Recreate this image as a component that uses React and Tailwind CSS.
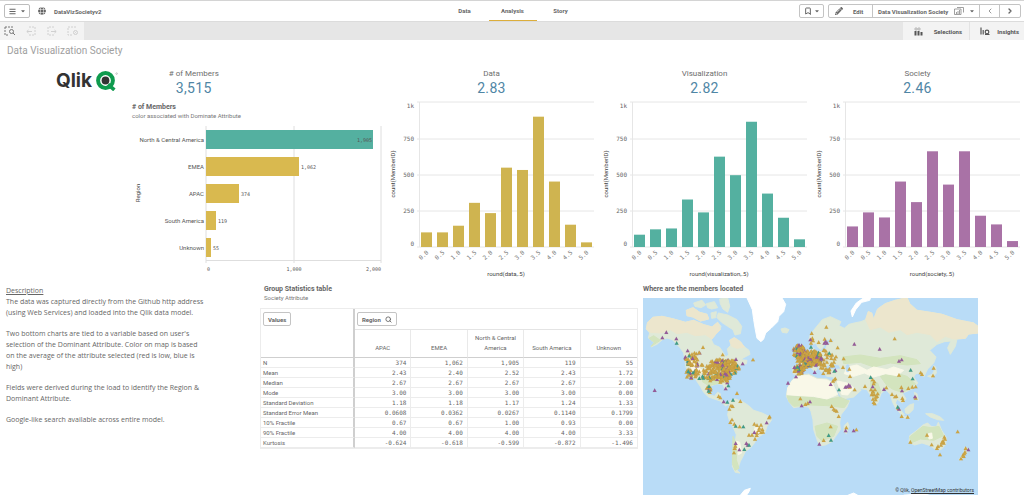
import React, { useState } from "react";
import clsx from "clsx";
import { FaBars, FaCaretDown, FaGlobe, FaPencilAlt } from "react-icons/fa";
import { LuBookmark, LuChevronLeft, LuChevronRight, LuSearch } from "react-icons/lu";

const GOLD = "#cfb450";
const TEAL = "#54b0a0";
const PURPLE = "#a972a6";

const tabs = ["Data", "Analysis", "Story"];

const regions = [
  { name: "North & Central America", value: 1905, label: "1,905", color: TEAL },
  { name: "EMEA", value: 1062, label: "1,062", color: "#d9b94f" },
  { name: "APAC", value: 374, label: "374", color: "#d9b94f" },
  { name: "South America", value: 119, label: "119", color: "#d9b94f" },
  { name: "Unknown", value: 55, label: "55", color: "#d9b94f" },
];

const histograms = [
  {
    title: "Data",
    kpi: "2.83",
    axis: "round(data,.5)",
    color: GOLD,
    values: [101, 101, 147, 305, 234, 548, 532, 900, 452, 154, 32],
  },
  {
    title: "Visualization",
    kpi: "2.82",
    axis: "round(visualization,.5)",
    color: TEAL,
    values: [85, 122, 128, 328, 239, 624, 496, 865, 369, 202, 53],
  },
  {
    title: "Society",
    kpi: "2.46",
    axis: "round(society,.5)",
    color: PURPLE,
    values: [142, 239, 204, 452, 310, 661, 431, 661, 216, 156, 41],
  },
];

const columns = ["APAC", "EMEA", "North & Central America", "South America", "Unknown"];

const rows = [
  ["N", "374", "1,062", "1,905", "119", "55"],
  ["Mean", "2.43", "2.40", "2.52", "2.43", "1.72"],
  ["Median", "2.67", "2.67", "2.67", "2.67", "2.00"],
  ["Mode", "3.00", "3.00", "3.00", "3.00", "0.00"],
  ["Standard Deviation", "1.18", "1.18", "1.17", "1.24", "1.33"],
  ["Standard Error Mean", "0.0608", "0.0362", "0.0267", "0.1140", "0.1799"],
  ["10% Fractile", "0.67", "0.67", "1.00", "0.93", "0.00"],
  ["90% Fractile", "4.00", "4.00", "4.00", "4.00", "3.33"],
  ["Kurtosis", "-0.624", "-0.618", "-0.599", "-0.872", "-1.496"],
];

function QlikMark() {
  return (
    <svg viewBox="0 0 22 20" className="h-5 w-[22px]" aria-hidden="true">
      <circle cx="9.5" cy="9.5" r="7.4" fill="none" stroke="#0f9b4e" strokeWidth="4" />
      <path d="M12 13.5l6.4 5.4" stroke="#0f9b4e" strokeWidth="3.6" />
      <circle cx="9.5" cy="9.5" r="3.9" fill="#333" />
      <circle cx="20.6" cy="2.6" r="0.8" fill="none" stroke="#999" strokeWidth="0.5" />
    </svg>
  );
}

function SelectionTool({ type }) {
  return (
    <svg viewBox="0 0 12 10" className="h-[10px] w-3" fill="none" stroke="currentColor" strokeWidth="1">
      {type === "search" && (
        <>
          <path d="M1 1h8M1 1v8h4" strokeDasharray="2 1" />
          <circle cx="7.5" cy="5.5" r="2" />
          <path d="M9 7l2 2" />
        </>
      )}
      {type === "back" && (
        <>
          <path d="M4 1h6v8H4" strokeDasharray="2 1" />
          <path d="M7 5.5H2M3.5 4L1.8 5.5l1.7 1.5" />
        </>
      )}
      {type === "forward" && (
        <>
          <path d="M8 1H2v8h6" strokeDasharray="2 1" />
          <path d="M5 5.5h5M8.5 4l1.7 1.5L8.5 7" />
        </>
      )}
      {type === "clear" && (
        <>
          <path d="M9 1H1v8h4" strokeDasharray="2 1" />
          <circle cx="8.5" cy="6.5" r="2" />
          <path d="M7.5 5.5l2 2M9.5 5.5l-2 2" strokeWidth="0.6" />
        </>
      )}
    </svg>
  );
}

function Header() {
  const [active, setActive] = useState("Analysis");

  return (
    <header className="flex h-[21px] items-stretch border-t border-[#d4d4d4] bg-white text-[6px] font-bold text-[#666]">
      <div className="flex flex-1 items-center gap-2 pl-1">
        <button
          type="button"
          aria-label="Navigation menu"
          className="flex h-[14px] w-[26px] items-center justify-center gap-1 rounded-xs border border-[#bdbdbd]"
        >
          <FaBars className="size-[7px]" />
          <FaCaretDown className="size-[6px]" />
        </button>
        <FaGlobe className="size-2" />
        <span>DataVizSocietyv2</span>
      </div>

      <nav className="flex">
        {tabs.map((tab) => (
          <button
            key={tab}
            type="button"
            onClick={() => setActive(tab)}
            className={clsx(
              "w-12 border-b",
              tab === active ? "border-[#dcae3c]" : "border-transparent"
            )}
          >
            {tab}
          </button>
        ))}
      </nav>

      <div className="flex flex-1 items-center justify-end gap-1 pr-[3px]">
        <button
          type="button"
          aria-label="Bookmarks"
          className="flex h-[14px] w-[25px] items-center justify-center gap-[2px] rounded-xs border border-[#c4c4c4]"
        >
          <LuBookmark className="size-2" strokeWidth={3} />
          <FaCaretDown className="size-[6px]" />
        </button>
        <div className="flex h-[14px] divide-x divide-[#c4c4c4] rounded-xs border border-[#c4c4c4]">
          <button type="button" className="flex w-11 items-center gap-[10px] pl-[6px]">
            <FaPencilAlt className="size-2" />
            Edit
          </button>
          <button
            type="button"
            className="flex w-[107px] items-center justify-between pr-1 pl-[5px] whitespace-nowrap"
          >
            Data Visualization Society
            <svg viewBox="0 0 10 8" className="h-2 w-[10px]" fill="none" stroke="#888">
              <path d="M3 0.5h6.5v5M0.5 2h6.5v5.5h-6.5zM2.5 7V5M4 7V4M5.5 7V3" strokeWidth="0.8" />
            </svg>
            <FaCaretDown className="size-[6px]" />
          </button>
          <button type="button" aria-label="Previous sheet" className="flex w-5 items-center justify-center">
            <LuChevronLeft className="size-2" strokeWidth={2} />
          </button>
          <button type="button" aria-label="Next sheet" className="flex w-5 items-center justify-center">
            <LuChevronRight className="size-2" strokeWidth={4} />
          </button>
        </div>
      </div>
    </header>
  );
}

function SelectionBar() {
  return (
    <div className="flex h-[19px] justify-between border-t border-[#dcdcdc] bg-[#e6e6e6] text-[6px] font-bold text-[#555]">
      <div className="flex w-[84px] items-center gap-[9px] bg-[#f3f3f3] pl-1">
        <button type="button" aria-label="Selection search" className="text-[#777]">
          <SelectionTool type="search" />
        </button>
        <button type="button" aria-label="Step back" className="text-[#d0d0d0]">
          <SelectionTool type="back" />
        </button>
        <button type="button" aria-label="Step forward" className="text-[#d0d0d0]">
          <SelectionTool type="forward" />
        </button>
        <button type="button" aria-label="Clear selections" className="text-[#d0d0d0]">
          <SelectionTool type="clear" />
        </button>
      </div>
      <div className="flex divide-x divide-[#e3e3e3] bg-[#f3f3f3]">
        <button type="button" className="flex w-[67px] items-center justify-between pr-[7px] pl-[11px]">
          <svg viewBox="0 0 9 9" className="size-[9px]" fill="#555">
            <path d="M1 1h2v2H1zM4 1h2v2H4z" fill="none" stroke="#999" strokeWidth="0.6" />
            <path d="M0.5 4h2v4.5h-2zM3.5 4h2v4.5h-2zM6.5 5h2v3.5h-2z" />
          </svg>
          Selections
        </button>
        <button type="button" className="flex w-[54px] items-center justify-between pr-[5px] pl-[10px]">
          <svg viewBox="0 0 10 9" className="h-[9px] w-[10px]" fill="none" stroke="#555" strokeWidth="1.2">
            <path d="M1 0.5v7M3.2 3v4.5M5 7.5h4.5" />
            <circle cx="7" cy="5" r="1.8" />
          </svg>
          Insights
        </button>
      </div>
    </div>
  );
}

function Kpi({ title, value }) {
  return (
    <div className="pt-[6px] text-center">
      <div className="text-[8px] leading-[10px] text-[#6e6e6e]">{title}</div>
      <div className="text-[14px] leading-[18px] tracking-wide text-[#4f86a5]">{value}</div>
    </div>
  );
}

function RegionChart() {
  return (
    <svg viewBox="0 0 255 160" className="w-full" role="img" aria-label="Members by region">
      {[76, 164, 251].map((x) => (
        <line key={x} x1={x} x2={x} y1="4" y2="141" stroke="#dedede" />
      ))}
      <line x1="76" x2="251" y1="138.5" y2="138.5" stroke="#dedede" />
      {regions.map((region, i) => {
        const y = 8 + i * 27;
        const width = Math.round((region.value / 2000) * 175);
        const inside = region.value > 1500;
        return (
          <g key={region.name}>
            <rect x="76" y={y} width={width} height="19" fill={region.color} />
            <text x="74" y={y + 12} textAnchor="end" className="fill-[#555] text-[6px]">
              {region.name}
            </text>
            <text
              x={inside ? 75 + width : 78 + width}
              y={y + 12}
              textAnchor={inside ? "end" : "start"}
              className="fill-[#555] font-['DejaVu_Sans_Mono',monospace] text-[5px]"
            >
              {region.label}
            </text>
          </g>
        );
      })}
      <g className="fill-[#555] font-['DejaVu_Sans_Mono',monospace] text-[5px]">
        <text x="77" y="149">0</text>
        <text x="164" y="149" textAnchor="middle">1,000</text>
        <text x="251" y="149" textAnchor="end">2,000</text>
      </g>
      <text transform="translate(10 71) rotate(-90)" textAnchor="middle" className="fill-[#444] text-[6px]">
        Region
      </text>
    </svg>
  );
}

function Histogram({ data }) {
  const base = 150;
  const unit = 36.2 / 250;
  const ticks = [
    { label: "1k", y: 5, text: 11 },
    { label: "750", y: 42, text: 44 },
    { label: "500", y: 78, text: 80 },
    { label: "250", y: 114, text: 116 },
    { label: "0", y: 150, text: 149 },
  ];

  return (
    <svg viewBox="0 0 213 185" className="w-full" role="img" aria-label={data.axis}>
      {ticks.map((tick) => (
        <g key={tick.label}>
          <line x1="32" x2="209" y1={tick.y} y2={tick.y} stroke="#e6e6e6" />
          <text
            x="29"
            y={tick.text}
            textAnchor="end"
            className="fill-[#666] font-['DejaVu_Sans_Mono',monospace] text-[6px]"
          >
            {tick.label}
          </text>
        </g>
      ))}
      <line x1="34.5" x2="34.5" y1="5" y2="150" stroke="#e6e6e6" />
      {data.values.map((value, i) => {
        const x = 36 + i * 16;
        return (
          <g key={i}>
            <rect x={x} y={base - value * unit} width="11" height={value * unit} fill={data.color} />
            <text
              transform={`translate(${x + 8} 156) rotate(-42)`}
              textAnchor="end"
              className="fill-[#777] font-['DejaVu_Sans_Mono',monospace] text-[6px]"
            >
              {(i / 2).toFixed(1)}
            </text>
          </g>
        );
      })}
      <text x="121" y="179" textAnchor="middle" className="fill-[#444] text-[6px]">
        {data.axis}
      </text>
      <text transform="translate(10 77) rotate(-90)" textAnchor="middle" className="fill-[#444] text-[6px]">
        count(MemberID)
      </text>
    </svg>
  );
}

function StatsTable() {
  return (
    <table className="w-full table-fixed border-separate border-spacing-0 border border-[#ececec] text-[6px] text-[#666]">
      <colgroup>
        <col className="w-1/4" />
        {columns.map((column) => (
          <col key={column} />
        ))}
      </colgroup>
      <thead>
        <tr className="h-[21px]">
          <th rowSpan={2} className="border-r-2 border-b border-[#cfcfcf] px-[2px] pt-[3px] text-left align-top">
            <button type="button" className="h-[14px] rounded-xs border border-[#c4c4c4] px-1 font-bold">
              Values
            </button>
          </th>
          <th colSpan={5} className="border-b border-[#e4e4e4] px-[2px] text-left">
            <button
              type="button"
              className="flex h-[14px] items-center gap-1 rounded-xs border border-[#c4c4c4] px-1 font-bold"
            >
              Region
              <LuSearch className="size-[7px]" strokeWidth={3} />
            </button>
          </th>
        </tr>
        <tr className="h-7">
          {columns.map((column) => (
            <th
              key={column}
              className="border-r border-b border-r-[#e9e9e9] border-b-[#cfcfcf] px-1 pb-1 align-bottom leading-[10px] font-normal last:border-r-0"
            >
              {column}
            </th>
          ))}
        </tr>
      </thead>
      <tbody>
        {rows.map(([name, ...cells]) => (
          <tr key={name} className="h-[10px] leading-[9px]">
            <th
              scope="row"
              className="border-r-2 border-b border-r-[#cfcfcf] border-b-[#ececec] pl-[2px] text-left font-normal whitespace-nowrap"
            >
              {name}
            </th>
            {cells.map((cell, i) => (
              <td
                key={i}
                className="border-r border-b border-[#ececec] pr-1 text-right font-['DejaVu_Sans_Mono',monospace] text-[6px] last:border-r-0"
              >
                {cell}
              </td>
            ))}
          </tr>
        ))}
      </tbody>
    </table>
  );
}

// Coast lines, in map units
const land = [
  // North America
  "22,128 38,113 65,110 100,118 135,128 160,122 190,135 215,142 232,128 242,140 238,152 225,165 213,180 220,195 238,203 248,218 257,232 265,225 261,208 272,196 268,182 282,174 300,186 310,200 326,212 329,224 310,234 302,240 320,242 318,252 300,256 290,268 278,280 268,295 258,308 263,325 256,332 248,315 230,312 212,318 205,330 208,345 222,350 232,338 241,343 238,355 248,366 264,374 256,379 240,364 222,358 205,352 190,338 180,320 163,295 145,280 137,262 133,235 130,220 120,205 108,192 96,180 80,175 66,180 50,194 32,202 42,188 24,175 28,160 18,148",
  // Arctic islands
  "138,92 158,84 178,98 200,104 205,118 180,124 158,112 140,108",
  "160,70 185,62 196,76 182,84 164,80",
  "198,72 222,66 232,84 214,88 202,84",
  "212,100 228,96 226,114 214,116",
  "238,58 262,55 268,80 262,98 248,88 240,72",
  "234,100 262,106 290,120 304,140 300,162 284,166 278,150 262,140 244,128 230,114",
  // South America
  "268,365 285,358 305,365 325,378 340,392 365,400 390,412 393,422 380,440 373,460 350,475 342,490 330,505 315,515 308,530 300,545 295,560 290,572 299,580 285,578 276,560 279,530 284,490 288,465 280,445 268,425 262,405 265,390",
  // Africa
  "470,287 505,283 530,296 560,298 577,307 590,342 602,364 628,362 620,382 602,405 598,430 600,450 586,470 575,486 555,496 540,498 532,485 520,450 518,420 512,395 505,382 485,380 460,384 447,368 438,350 442,325 455,302",
  "612,438 622,428 626,440 618,462 611,456",
  // Europe and Asia
  "458,282 457,262 478,258 470,245 480,238 492,232 505,222 515,216 512,204 521,206 526,218 545,215 556,210 560,196 575,186 588,180 568,178 556,182 552,196 542,210 532,202 528,190 516,194 506,180 510,165 528,142 546,120 570,111 602,126 596,138 612,146 626,134 642,130 662,126 676,120 684,96 694,100 700,120 712,88 735,72 765,62 800,54 808,72 830,92 870,98 905,104 950,120 1000,130 1013,140 1013,160 985,163 975,176 950,178 945,200 930,224 922,205 932,184 912,186 890,194 868,212 887,232 880,250 862,268 850,292 840,280 826,282 820,292 832,310 820,325 800,335 786,340 797,358 786,370 770,358 765,370 777,388 770,392 757,368 750,345 736,328 722,342 712,370 702,376 690,346 680,330 657,326 662,332 640,352 606,358 594,336 578,306 580,292 560,290 548,280 560,270 580,270 602,268 596,256 572,252 556,262 544,278 532,262 515,250 530,268 524,276 505,258 492,258 480,272 470,285",
  "480,224 490,222 492,212 484,196 476,194 473,204 478,212",
  "460,220 470,216 470,206 461,208",
  "422,148 434,145 446,150 440,160 426,158",
  // Oceania and south east Asia
  "806,488 808,468 830,452 848,436 862,430 872,440 888,442 894,428 904,452 918,474 916,494 902,510 886,510 870,498 845,490 822,496",
  "856,402 876,402 900,412 910,422 892,420 870,412",
  "794,388 808,376 820,372 818,390 806,402 796,400",
  "762,374 774,382 792,406 786,408 768,388",
  "784,410 808,412 806,416 786,414",
  "822,338 830,342 834,362 826,356",
  "862,290 876,284 884,268 880,258 886,262 888,280 876,294",
  "974,502 986,510 978,520 962,542 956,540 970,522",
];

const tundra = [
  "22,128 38,113 65,110 100,118 135,128 160,122 190,135 215,142 232,128 240,150 225,165 215,178 195,165 165,168 140,158 110,162 90,150 60,160 30,158 18,148",
  "138,92 158,84 178,98 200,104 205,118 180,124 158,112 140,108",
  "676,120 684,96 694,100 700,120 712,88 735,72 765,62 800,54 808,72 830,92 870,98 905,104 950,120 1000,130 1013,140 1013,160 985,163 975,176 940,178 915,170 890,186 870,165 830,158 800,165 780,150 745,158 720,142 690,150",
  "268,182 282,174 300,186 312,202 290,206 274,200",
];

const meadow = [
  "606,232 660,226 720,236 780,228 830,240 840,252 800,256 750,250 700,262 660,248 610,252",
  "720,290 760,278 800,290 825,312 800,332 786,338 760,330 740,318",
  "440,348 480,350 520,354 560,360 598,352 626,364 612,384 560,378 512,376 460,380 446,366",
  "524,440 560,430 592,440 580,470 545,484 530,470",
  "808,472 848,440 872,444 896,440 910,468 880,482 840,478 812,490",
  "32,200 42,188 26,176 40,168 60,182",
  "190,290 225,282 262,300 240,310 205,318 186,306",
  "278,470 290,500 288,540 296,566 284,572 276,552",
  "690,300 712,310 722,336 706,366 694,344",
];

const bare = [
  "442,325 455,304 470,290 505,287 530,299 560,301 575,309 592,344 560,358 520,350 480,348 440,345",
  "620,262 650,256 680,272 700,262 740,270 760,262 790,272 770,288 735,282 700,292 672,280 640,290 612,282",
  "590,304 620,310 640,324 622,346 604,344",
  "148,240 165,235 172,262 190,275 176,286 156,276",
  "864,462 874,460 876,476 866,478",
  "289,485 298,488 304,520 294,525",
  "345,440 360,444 356,462 340,462",
];

const ice = [
  "320,55 425,55 436,74 430,96 416,110 412,126 392,146 376,160 370,178 362,186 350,176 345,150 340,120 336,90",
  "636,112 632,94 648,70 668,56 692,50 688,62 664,68 646,90",
  "300,647 312,632 330,626 326,636 318,648",
  "620,648 640,640 654,648",
  "790,647 850,641 870,648",
];

// g = data, t = visualization, p = society
const members = {
  g: [
    [188, 203], [247, 225], [338, 240], [290, 341], [300, 365], [235, 350], [240, 354], [277, 380], [267, 388], [272, 378],
    [388, 411], [386, 414], [275, 420], [270, 428], [282, 433], [298, 441], [342, 433], [350, 437], [362, 436], [366, 449], [355, 452],
    [362, 458], [349, 467], [344, 478], [335, 466], [326, 466], [368, 457], [285, 499], [283, 506], [281, 519], [350, 460], [357, 445],
    [480, 357], [502, 371], [495, 374], [574, 380], [580, 388], [589, 394], [595, 410], [584, 392], [571, 441], [550, 482], [618, 444], [648, 450],
    [514, 161], [558, 142], [518, 183], [553, 178], [571, 182], [512, 190], [535, 188], [516, 176], [592, 204], [587, 231], [610, 237], [608, 263], [627, 268],
    [629, 290], [585, 297], [578, 304], [582, 300], [643, 330], [628, 322], [674, 320], [697, 300], [702, 306], [700, 312], [692, 330], [698, 335], [704, 330],
    [694, 345], [702, 345], [710, 350], [698, 358], [706, 360], [700, 368], [712, 342], [706, 352], [696, 340], [703, 372], [738, 324], [763, 177], [776, 286],
    [841, 279], [845, 284], [878, 288], [880, 265], [783, 323], [804, 326], [816, 322], [826, 321], [755, 344], [768, 350], [786, 356], [788, 362], [764, 351], [826, 355],
    [784, 410], [802, 412], [774, 386], [860, 466], [810, 487], [874, 495], [893, 500], [912, 472], [914, 478], [908, 484], [902, 496], [910, 490], [890, 506],
    [905, 488], [899, 525], [952, 456], [976, 506], [974, 517], [968, 526], [972, 522], [962, 537], [970, 530],
  ],
  p: [
    [78, 158], [66, 174], [108, 177], [142, 213], [43, 332], [307, 252], [287, 239], [250, 366], [256, 327], [379, 429], [342, 458], [286, 491], [297, 510],
    [318, 491], [322, 496], [443, 310], [467, 291], [484, 378], [509, 366], [537, 493], [616, 453], [640, 453], [552, 190], [560, 190], [556, 186], [571, 314], [585, 272],
    [615, 322], [625, 316], [629, 319], [620, 321], [642, 193], [718, 208], [776, 244], [784, 240], [731, 329], [785, 333], [824, 351], [776, 388], [984, 510], [523, 278], [697, 321],
    [462, 263], [476, 196], [510, 180],
  ],
  t: [
    [109, 190], [206, 320], [261, 367], [278, 361], [264, 318], [286, 439], [309, 441], [312, 509], [326, 496], [205, 334], [565, 467], [572, 481], [596, 330], [582, 274],
    [691, 293], [811, 271], [817, 297], [772, 382], [512, 202], [144, 275],
  ],
};

// Dense areas are filled from a fixed sequence, so that they never move
const clusters = [
  { cx: 152, cy: 240, rx: 20, ry: 18, count: 30 },
  { cx: 152, cy: 282, rx: 18, ry: 14, count: 22 },
  { cx: 186, cy: 272, rx: 24, ry: 26, count: 28 },
  { cx: 218, cy: 290, rx: 16, ry: 16, count: 20 },
  { cx: 236, cy: 262, rx: 32, ry: 26, count: 80 },
  { cx: 270, cy: 262, rx: 26, ry: 22, count: 80 },
  { cx: 252, cy: 294, rx: 22, ry: 16, count: 34 },
  { cx: 165, cy: 222, rx: 14, ry: 12, count: 5 },
  { cx: 206, cy: 330, rx: 10, ry: 10, count: 9 },
  { cx: 476, cy: 214, rx: 18, ry: 19, count: 55 },
  { cx: 512, cy: 236, rx: 32, ry: 24, count: 150 },
  { cx: 484, cy: 246, rx: 18, ry: 20, count: 30 },
  { cx: 472, cy: 273, rx: 17, ry: 12, count: 28 },
  { cx: 496, cy: 262, rx: 12, ry: 10, count: 12 },
  { cx: 556, cy: 240, rx: 28, ry: 32, count: 40 },
  { cx: 560, cy: 276, rx: 16, ry: 8, count: 9 },
];

function spread() {
  let seed = 7;
  const next = () => {
    seed = (seed * 16807) % 2147483647;
    return seed / 2147483647;
  };
  return clusters.flatMap(({ cx, cy, rx, ry, count }) =>
    Array.from({ length: count }, () => {
      const angle = next() * Math.PI * 2;
      const distance = Math.sqrt(next());
      const pick = next();
      return {
        x: cx + Math.cos(angle) * distance * rx,
        y: cy + Math.sin(angle) * distance * ry,
        kind: pick < 0.8 ? "g" : pick < 0.92 ? "p" : "t",
      };
    })
  );
}

const points = [
  ...spread(),
  ...Object.entries(members).flatMap(([kind, list]) => list.map(([x, y]) => ({ x, y, kind }))),
];

const fills = { g: "#cda544", p: "#93599c", t: "#3c9c8a" };

function Shapes({ list, fill }) {
  return list.map((shape) => (
    <polygon key={shape} points={shape} fill={fill} stroke={fill} strokeWidth="3" strokeLinejoin="round" />
  ));
}

function MemberMap() {
  return (
    <div className="relative">
      <svg viewBox="8 55 1005 592" className="w-full bg-[#b9dcf7]" role="img" aria-label="Member locations">
        <Shapes list={land} fill="#dfe9d8" />
        <Shapes list={tundra} fill="#ece6cd" />
        <Shapes list={meadow} fill="#d3e4be" />
        <Shapes list={bare} fill="#f9f8e8" />
        <Shapes list={ice} fill="#ffffff" />
        <ellipse cx="622" cy="266" rx="6" ry="12" fill="#b9dcf7" />
        {points.map(({ x, y, kind }, i) => (
          <path
            key={i}
            d={`M${x} ${y - 6}l6 11h-12z`}
            fill={fills[kind]}
            stroke="#8f7a3a"
            strokeOpacity="0.25"
            strokeWidth="0.8"
          />
        ))}
      </svg>
      <div className="absolute right-1 bottom-0 text-[5px] leading-[9px] text-[#333]">
        © Qlik,{" "}
        <a href="https://www.openstreetmap.org/copyright" className="underline">
          OpenStreetMap contributors
        </a>
      </div>
    </div>
  );
}

function PanelTitle({ title, subtitle }) {
  return (
    <div className="leading-[9px] text-[#777]">
      <h2 className="text-[7px] font-bold text-[#666]">{title}</h2>
      {subtitle && <p className="text-[6px] leading-[8px]">{subtitle}</p>}
    </div>
  );
}

function App() {
  return (
    <div className="min-h-screen bg-white font-[Roboto,sans-serif]">
      <Header />
      <SelectionBar />

      <main>
        <h1 className="px-[7px] pt-1 text-[10px] leading-[14px] text-[#a0a0a0]">Data Visualization Society</h1>

        <section className="grid grid-cols-[130fr_255fr_213fr_213fr_213fr] pt-[5px]">
          <div className="flex items-start justify-end gap-1 pt-2 pr-3">
            <span className="font-[Inter,sans-serif] text-[19px] leading-5 font-bold text-[#333]">Qlik</span>
            <QlikMark />
          </div>
          <div>
            <div className="w-1/2">
              <Kpi title="# of Members" value="3,515" />
            </div>
            <div className="px-[2px] pt-[6px] pb-[2px]">
              <PanelTitle title="# of Members" subtitle="color associated with Dominate Attribute" />
            </div>
            <RegionChart />
          </div>
          {histograms.map((item) => (
            <div key={item.title}>
              <Kpi title={item.title} value={item.kpi} />
              <Histogram data={item} />
            </div>
          ))}
        </section>

        <section className="grid grid-cols-[260fr_378fr_340fr_46fr] pt-[3px]">
          <div className="space-y-[10px] pr-[54px] pl-[6px] font-['Open_Sans',sans-serif] text-[7px] leading-[11px] text-[#666]">
            <div>
              <h2 className="underline">Description</h2>
              <p>
                The data was captured directly from the Github http address (using Web Services) and loaded into the
                Qlik data model.
              </p>
            </div>
            <p>
              Two bottom charts are tied to a variable based on user's selection of the Dominant Attribute. Color on
              map is based on the average of the attribute selected (red is low, blue is high)
            </p>
            <p>Fields were derived during the load to identify the Region &amp; Dominant Attribute.</p>
            <p>Google-like search available across entire model.</p>
          </div>
          <div>
            <div className="px-1 pb-[6px]">
              <PanelTitle title="Group Statistics table" subtitle="Society Attribute" />
            </div>
            <StatsTable />
          </div>
          <div className="pl-[5px]">
            <div className="pb-1">
              <PanelTitle title="Where are the members located" />
            </div>
            <MemberMap />
          </div>
        </section>
      </main>
    </div>
  );
}

export default App;
